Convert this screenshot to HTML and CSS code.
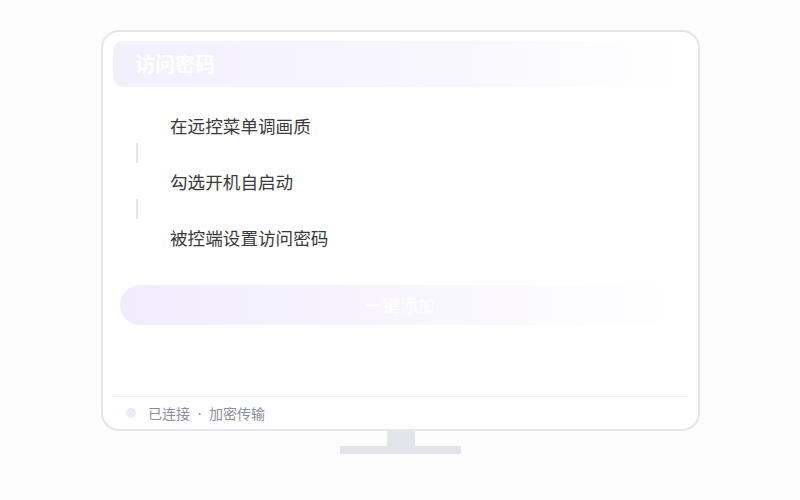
FILE: index.html
```html
<!DOCTYPE html>
<html lang="zh">
<head>
<meta charset="utf-8">
<link rel="stylesheet" href="styles.css">
</head>
<body>
<div class="monitor">
  <div class="screen">
    <div class="header">访问密码</div>
    <div class="steps">
      <div class="step"><span class="marker"></span><span class="label">在远控菜单调画质</span></div>
      <div class="connector"></div>
      <div class="step"><span class="marker"></span><span class="label">勾选开机自启动</span></div>
      <div class="connector"></div>
      <div class="step"><span class="marker"></span><span class="label">被控端设置访问密码</span></div>
    </div>
    <div class="action">一键添加</div>
    <div class="footer">
      <span class="dot"></span>
      <span class="status">已连接<span class="sep"> · </span>加密传输</span>
    </div>
  </div>
  <div class="neck"></div>
  <div class="base"></div>
</div>
</body>
</html>
```
FILE: styles.css
```css
html, body {
  margin: 0;
  padding: 0;
  background: #fcfcfd;
  font-family: "Noto Sans CJK SC", "Noto Sans", sans-serif;
}
body {
  width: 800px;
  height: 500px;
  overflow: hidden;
}
.monitor {
  display: flex;
  flex-direction: column;
  align-items: center;
  padding-top: 30px;
  padding-left: 1px;
}
.screen {
  box-sizing: border-box;
  width: 599px;
  height: 401px;
  border: 2px solid #e3e6eb;
  border-radius: 18px;
  background: #ffffff;
  padding: 9px 10px 0 10px;
  display: flex;
  flex-direction: column;
}
.header {
  height: 46px;
  border-radius: 10px;
  background: linear-gradient(90deg, #f3f0fe 0%, #f8f6fe 55%, rgba(255,255,255,0) 100%);
  color: #ffffff;
  font-size: 20px;
  font-weight: 700;
  line-height: 46px;
  padding-left: 22px;
}
.steps {
  margin-top: 20px;
  padding-left: 13px;
  display: flex;
  flex-direction: column;
}
.step {
  height: 36px;
  display: flex;
  align-items: center;
  gap: 20px;
}
.marker {
  width: 24px;
  height: 24px;
  flex: none;
}
.label {
  font-size: 17.6px;
  color: #3a3a3a;
}
.connector {
  width: 2px;
  height: 20px;
  margin-left: 10px;
  background: #e6e6ec;
}
.action {
  margin: 30px 8px 0 7px;
  height: 40px;
  border-radius: 20px;
  background: linear-gradient(90deg, #f0ecfe 0%, #f7f4fe 45%, rgba(255,255,255,0) 100%);
  color: #ffffff;
  font-size: 17.5px;
  line-height: 40px;
  text-align: center;
}
.footer {
  margin-top: auto;
  height: 32px;
  border-top: 1px solid #eef0f3;
  display: flex;
  align-items: center;
  gap: 12px;
  padding-left: 13px;
}
.dot {
  width: 10px;
  height: 10px;
  border-radius: 50%;
  background: #ece8fd;
}
.status {
  font-size: 14px;
  color: #8a8f99;
}
.sep {
  font-family: "Noto Sans", sans-serif;
  padding: 0 4px;
}
.neck {
  width: 28px;
  height: 15px;
  background: #e2e5ea;
}
.base {
  width: 121px;
  height: 8px;
  background: #e2e5ea;
}
```
